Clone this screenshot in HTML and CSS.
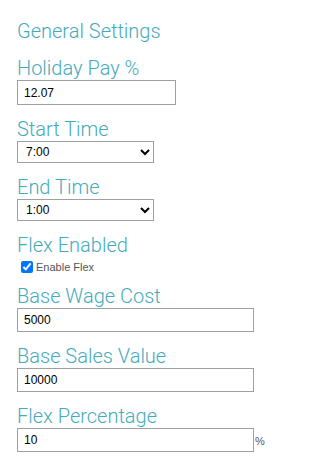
FILE: index.html
```html
<!DOCTYPE html>
<html lang="en">
<head>
    <meta charset="UTF-8">
    <meta name="viewport" content="width=device-width, initial-scale=1.0">
    <title>General Settings</title>
    <link rel="stylesheet" href="styles.css">
</head>
<body>

<div class="settings">
    <h3 class="section-title">General Settings</h3>

    <div class="field">
        <label for="holidayPay">Holiday Pay %</label>
        <input type="text" id="holidayPay" class="input-short" value="12.07">
    </div>

    <div class="field">
        <label for="startTime">Start Time</label>
        <select id="startTime">
            <option>6:00</option>
            <option selected>7:00</option>
            <option>8:00</option>
        </select>
    </div>

    <div class="field">
        <label for="endTime">End Time</label>
        <select id="endTime">
            <option selected>1:00</option>
            <option>2:00</option>
            <option>3:00</option>
        </select>
    </div>

    <div class="field">
        <label>Flex Enabled</label>
        <span class="check">
            <input type="checkbox" id="flexEnabled" checked>
            <label for="flexEnabled">Enable Flex</label>
        </span>
    </div>

    <div class="field">
        <label for="baseWage">Base Wage Cost</label>
        <input type="text" id="baseWage" class="input-wide" value="5000">
    </div>

    <div class="field">
        <label for="baseSales">Base Sales Value</label>
        <input type="text" id="baseSales" class="input-wide" value="10000">
    </div>

    <div class="field">
        <label for="flexPct">Flex Percentage</label>
        <div class="with-unit">
            <input type="text" id="flexPct" class="input-wide" value="10">
            <span class="unit">%</span>
        </div>
    </div>
</div>

</body>
</html>
```

FILE: styles.css
```css
body {
    margin: 0;
    font-family: "Liberation Sans", Arial, sans-serif;
    background-color: #fff;
}

.settings {
    padding: 20px 17px 0;
}

.section-title,
.field > label {
    display: block;
    margin: 0;
    font-family: Roboto, "Liberation Sans", sans-serif;
    font-weight: 300;
    font-size: 20px;
    line-height: 22px;
    color: #45abbb;
}

.section-title {
    margin-bottom: 15px;
}

.field {
    margin-bottom: 13px;
}

.field > label {
    margin-bottom: 1px;
}

input[type="text"] {
    display: block;
    height: 25px;
    padding: 4px 6px;
    font-family: "Liberation Sans", Arial, sans-serif;
    font-size: 12px;
    color: #000;
    border: 1px solid #a0a0a0;
    border-radius: 0;
    box-sizing: border-box;
}

.input-short {
    width: 159px;
}

input.input-wide {
    width: 237px;
    height: 24px;
}

select {
    display: block;
    width: 137px;
    height: 22px;
    padding: 0 4px;
    font-family: "Liberation Sans", Arial, sans-serif;
    font-size: 12px;
    color: #000;
    background-color: #fff;
    border: 1px solid #a0a0a0;
    border-radius: 0;
}

.check {
    display: flex;
    align-items: flex-start;
    height: 15px;
    font-size: 11px;
    color: #555;
}

.check input {
    width: 12px;
    height: 12px;
    margin: 4px 3px 0 4px;
}

.check label {
    margin-top: 4px;
}

.with-unit {
    display: flex;
    align-items: flex-end;
}

.unit {
    font-size: 11px;
    color: #555;
    margin-left: 1px;
    margin-bottom: 5px;
}
```
